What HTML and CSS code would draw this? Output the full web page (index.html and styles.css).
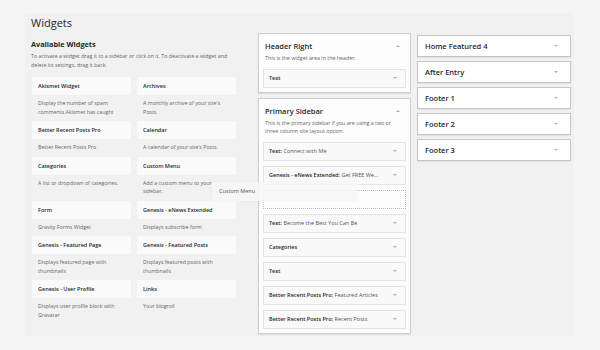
FILE: index.html
```html
<!DOCTYPE html>
<html>
<head>
<meta charset="utf-8">
<link rel="stylesheet" href="styles.css">
</head>
<body>
<div class="wrap">
  <h1 class="page-title">Widgets</h1>
  <div class="cols">
    <section class="avail">
      <h2 class="avail-title">Available Widgets</h2>
      <p class="avail-desc">To activate a widget drag it to a sidebar or click on it. To deactivate a widget and delete its settings, drag it back.</p>
      <div class="wgrid">
        <div class="widget"><div class="w-title">Akismet Widget</div><div class="w-desc">Display the number of spam comments Akismet has caught</div></div>
        <div class="widget"><div class="w-title">Archives</div><div class="w-desc">A monthly archive of your site's Posts.</div></div>
        <div class="widget"><div class="w-title">Better Recent Posts Pro</div><div class="w-desc">Better Recent Posts Pro</div></div>
        <div class="widget"><div class="w-title">Calendar</div><div class="w-desc">A calendar of your site's Posts.</div></div>
        <div class="widget"><div class="w-title">Categories</div><div class="w-desc">A list or dropdown of categories.</div></div>
        <div class="widget"><div class="w-title">Custom Menu</div><div class="w-desc">Add a custom menu to your sidebar.</div></div>
        <div class="widget"><div class="w-title">Form</div><div class="w-desc">Gravity Forms Widget</div></div>
        <div class="widget"><div class="w-title">Genesis - eNews Extended</div><div class="w-desc">Displays subscribe form</div></div>
        <div class="widget"><div class="w-title">Genesis - Featured Page</div><div class="w-desc">Displays featured page with thumbnails</div></div>
        <div class="widget"><div class="w-title">Genesis - Featured Posts</div><div class="w-desc">Displays featured posts with thumbnails</div></div>
        <div class="widget"><div class="w-title">Genesis - User Profile</div><div class="w-desc">Displays user profile block with Gravatar</div></div>
        <div class="widget"><div class="w-title">Links</div><div class="w-desc">Your blogroll</div></div>
      </div>
    </section>

    <section class="mid">
      <div class="sidebar">
        <div class="sb-head"><h3 class="sb-title">Header Right</h3><span class="arrow-up"></span></div>
        <p class="sb-desc">This is the widget area in the header.</p>
        <div class="items">
          <div class="item"><span class="item-text"><b>Text</b></span><span class="arrow-down"></span></div>
        </div>
      </div>
      <div class="sidebar">
        <div class="sb-head"><h3 class="sb-title">Primary Sidebar</h3><span class="arrow-up"></span></div>
        <p class="sb-desc">This is the primary sidebar if you are using a two or three column site layout option.</p>
        <div class="items">
          <div class="item"><span class="item-text"><b>Text:</b> Connect with Me</span><span class="arrow-down"></span></div>
          <div class="item"><span class="item-text"><b>Genesis - eNews Extended:</b> Get FREE We...</span><span class="arrow-down"></span></div>
          <div class="placeholder"></div>
          <div class="item"><span class="item-text"><b>Text:</b> Become the Best You Can Be</span><span class="arrow-down"></span></div>
          <div class="item"><span class="item-text"><b>Categories</b></span><span class="arrow-down"></span></div>
          <div class="item"><span class="item-text"><b>Text</b></span><span class="arrow-down"></span></div>
          <div class="item"><span class="item-text"><b>Better Recent Posts Pro:</b> Featured Articles</span><span class="arrow-down"></span></div>
          <div class="item"><span class="item-text"><b>Better Recent Posts Pro:</b> Recent Posts</span><span class="arrow-down"></span></div>
        </div>
      </div>
    </section>

    <section class="right">
      <div class="rbox"><span class="rbox-title">Home Featured 4</span><span class="arrow-down"></span></div>
      <div class="rbox"><span class="rbox-title">After Entry</span><span class="arrow-down"></span></div>
      <div class="rbox"><span class="rbox-title">Footer 1</span><span class="arrow-down"></span></div>
      <div class="rbox"><span class="rbox-title">Footer 2</span><span class="arrow-down"></span></div>
      <div class="rbox"><span class="rbox-title">Footer 3</span><span class="arrow-down"></span></div>
    </section>
  </div>
</div>
<div class="drag-helper">Custom Menu</div>
</body>
</html>
```
FILE: styles.css
```css
* { box-sizing: border-box; }
html, body { margin: 0; padding: 0; }
body {
  background: #f5f5f5;
  font-family: "Open Sans", "Noto Sans", sans-serif;
  color: #222;
  width: 600px;
  height: 350px;
  overflow: hidden;
  position: relative;
}
.wrap {
  margin: 13px 26px 0 25px;
  height: 323px;
  background: #f1f1f1;
  padding: 3px 0 0 6px;
}
.page-title {
  margin: 0 0 3px;
  font-size: 11px;
  line-height: 14px;
  font-weight: 400;
  color: #23282d;
}
.cols {
  display: flex;
  align-items: flex-start;
}
.avail {
  width: 206px;
  margin-right: 21px;
}
.avail-title {
  margin: 6px 0 0;
  font-size: 7.3px;
  line-height: 10px;
  font-weight: 700;
  color: #23282d;
}
.avail-desc {
  margin: 3px 0 7px;
  font-size: 5.3px;
  line-height: 9px;
  color: #666;
  width: 202px;
}
.wgrid {
  display: grid;
  grid-template-columns: 99px 99px;
  column-gap: 6px;
  margin-left: 1px;
}
.w-title {
  height: 18px;
  line-height: 18px;
  background: #fafafa;
  padding-left: 6px;
  font-size: 5.5px;
  font-weight: 600;
  color: #23282d;
}
.w-desc {
  padding: 4px 6px 5px;
  font-size: 5.3px;
  line-height: 8.5px;
  color: #666;
}
.mid {
  width: 153px;
  margin-right: 6px;
  display: flex;
  flex-direction: column;
  gap: 5px;
}
.sidebar {
  background: #fdfdfd;
  border: 1px solid #cfcfcf;
  box-shadow: 0 1px 1px rgba(0,0,0,.08);
  padding: 7px 4px 4px;
}
.sb-head {
  display: flex;
  align-items: center;
  justify-content: space-between;
  padding: 0 6px 0 2px;
}
.sb-title {
  margin: 0;
  font-size: 7.5px;
  line-height: 10px;
  font-weight: 600;
  color: #23282d;
}
.sb-desc {
  margin: 3px 0 6px;
  padding: 0 10px 0 2px;
  font-size: 5.3px;
  line-height: 8.5px;
  color: #666;
}
.items {
  display: flex;
  flex-direction: column;
  gap: 5px;
}
.item {
  height: 19px;
  background: #f9f9f9;
  border: 1px solid #e4e4e4;
  display: flex;
  align-items: center;
  justify-content: space-between;
  padding: 0 8px 0 5px;
}
.item-text {
  font-size: 5.5px;
  color: #555;
}
.item-text b {
  font-weight: 600;
  color: #23282d;
}
.placeholder {
  height: 19px;
  border: 1px dotted #bdbdbd;
}
.arrow-down, .arrow-up {
  width: 0;
  height: 0;
  border-left: 2px solid transparent;
  border-right: 2px solid transparent;
}
.arrow-down { border-top: 2.5px solid #b0b0b0; }
.arrow-up { border-bottom: 2.5px solid #b0b0b0; }
.right {
  width: 154px;
  display: flex;
  flex-direction: column;
  gap: 4px;
  margin-top: 2px;
}
.rbox {
  height: 22px;
  background: #fff;
  border: 1px solid #c6c6c6;
  box-shadow: 0 1px 1px rgba(0,0,0,.06);
  display: flex;
  align-items: center;
  justify-content: space-between;
  padding: 0 12px 0 7px;
}
.rbox-title {
  font-size: 7.5px;
  font-weight: 600;
  color: #23282d;
}
.drag-helper {
  position: absolute;
  left: 212px;
  top: 182px;
  width: 145px;
  height: 19px;
  line-height: 19px;
  padding-left: 7px;
  background: rgba(247,247,247,.85);
  box-shadow: 0 0 1px rgba(0,0,0,.08);
  font-size: 5.5px;
  color: #555;
}
```
